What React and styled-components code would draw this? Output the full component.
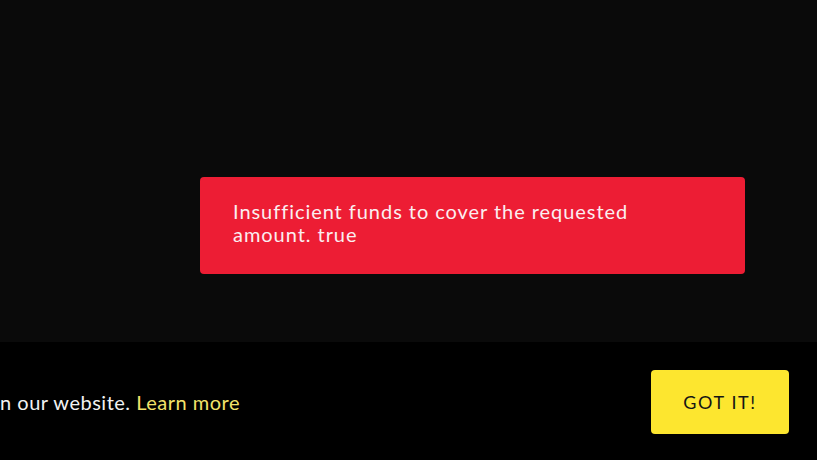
import React from "react";
import styled, { createGlobalStyle } from "styled-components";

const Global = createGlobalStyle`
  html, body { margin: 0; padding: 0; background: #0a0a0a; }
  body { font-family: Lato, "Open Sans", sans-serif; overflow: hidden; }
`;

const Page = styled.div`
  width: 817px;
  height: 460px;
  display: flex;
  flex-direction: column;
  background: #0a0a0a;
  overflow: hidden;
`;

const Main = styled.main`
  height: 342px;
  box-sizing: border-box;
  padding: 177px 0 0 200px;
`;

const Toast = styled.div`
  width: 545px;
  height: 97px;
  box-sizing: border-box;
  padding: 23px 80px 0 33px;
  background: #ed1d34;
  border-radius: 4px;
  color: #fbeef0;
  font-size: 20px;
  letter-spacing: 0.95px;
  line-height: 23px;
`;

const Banner = styled.div`
  flex: 1;
  background: #000;
  display: flex;
  align-items: center;
  justify-content: space-between;
  padding: 1px 28px 0 0;
`;

const MessageWrap = styled.div`
  width: 240px;
  display: flex;
  justify-content: flex-end;
`;

const Message = styled.p`
  margin: 0;
  white-space: nowrap;
  flex-shrink: 0;
  color: #f2f2f2;
  font-size: 20px;
  letter-spacing: 0.5px;
`;

const Link = styled.a`
  color: #f3e36a;
  text-decoration: none;
`;

const Button = styled.button`
  width: 138px;
  height: 64px;
  border: none;
  border-radius: 4px;
  background: #fde62f;
  color: #141414;
  font-family: Lato, sans-serif;
  font-size: 18px;
  letter-spacing: 1.6px;
  cursor: pointer;
`;

export default function App() {
  return (
    <>
      <Global />
      <Page>
        <Main>
          <Toast>Insufficient funds to cover the requested amount. true</Toast>
        </Main>
        <Banner>
          <MessageWrap>
            <Message>
              We use cookies to ensure you get the best experience on our website.{" "}
              <Link href="#">Learn more</Link>
            </Message>
          </MessageWrap>
          <Button>GOT IT!</Button>
        </Banner>
      </Page>
    </>
  );
}
